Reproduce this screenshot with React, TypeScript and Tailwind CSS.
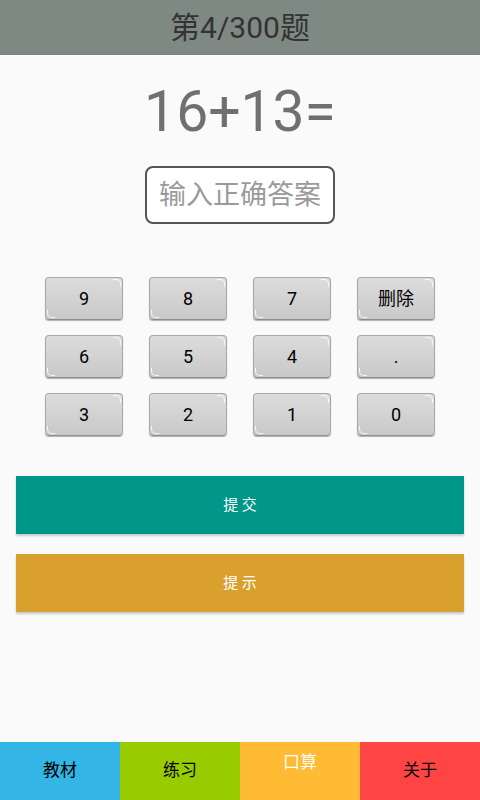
const keys = ["9", "8", "7", "删除", "6", "5", "4", ".", "3", "2", "1", "0"];

function Key({ label }: { label: string }) {
  return (
    <button
      type="button"
      className="relative h-[43px] w-[78px] rounded-[4px] border border-[#a9a9a9] border-b-[#8f8f8f] bg-linear-to-b from-[#dcdcdc] to-[#c9c9c9] text-[18px] text-black shadow-[0_1px_1px_rgba(0,0,0,0.3)]"
    >
      <span className="absolute right-[1px] top-[1px] h-[8px] w-[8px] rounded-tr-[5px] border-r-[1.5px] border-t-[1.5px] border-white/80" />
      <span className="absolute bottom-[1px] left-[1px] h-[8px] w-[8px] rounded-bl-[5px] border-b-[1.5px] border-l-[1.5px] border-white/80" />
      {label}
    </button>
  );
}

function BottomTab({ label, className, textClass }: { label: string; className: string; textClass: string }) {
  return (
    <div className={`flex flex-1 justify-center ${className}`}>
      <span className={textClass}>{label}</span>
    </div>
  );
}

export default function App() {
  return (
    <div
      className="flex h-[800px] w-[480px] flex-col bg-[#fafafa]"
      style={{ fontFamily: 'Roboto, "Noto Sans CJK SC", sans-serif' }}
    >
      <header className="flex h-[55px] items-center justify-center bg-[#7f8984]">
        <h1 className="text-[30px] leading-none text-[#333333]">第4/300题</h1>
      </header>

      <div className="mt-[27px] text-center text-[57px] leading-[60px] text-[#707070]">16+13=</div>

      <div className="mt-[24px] flex justify-center">
        <div className="flex h-[58px] w-[190px] items-center justify-center rounded-[8px] border-2 border-[#555555] bg-white text-[27px] text-[#9a9a9a]">
          输入正确答案
        </div>
      </div>

      <div className="mx-auto mt-[53px] grid grid-cols-4 gap-x-[26px] gap-y-[15px]">
        {keys.map((k) => (
          <Key key={k} label={k} />
        ))}
      </div>

      <div className="mx-4 mt-[40px] flex flex-col gap-[20px]">
        <button
          type="button"
          className="h-[58px] bg-[#009688] text-[15px] text-white shadow-[0_2px_2px_rgba(0,0,0,0.2)]"
        >
          提 交
        </button>
        <button
          type="button"
          className="h-[58px] bg-[#d9a02e] text-[15px] text-white shadow-[0_2px_2px_rgba(0,0,0,0.2)]"
        >
          提 示
        </button>
      </div>

      <nav className="mt-auto flex h-[58px]">
        <BottomTab label="教材" className="items-center bg-[#33b5e5]" textClass="text-[17px] text-black" />
        <BottomTab label="练习" className="items-center bg-[#99cc00]" textClass="text-[17px] text-black" />
        <BottomTab label="口算" className="items-start bg-[#ffbb33] pt-[8px]" textClass="text-[17px] text-white" />
        <BottomTab label="关于" className="items-center bg-[#ff4444]" textClass="text-[17px] text-black" />
      </nav>
    </div>
  );
}
